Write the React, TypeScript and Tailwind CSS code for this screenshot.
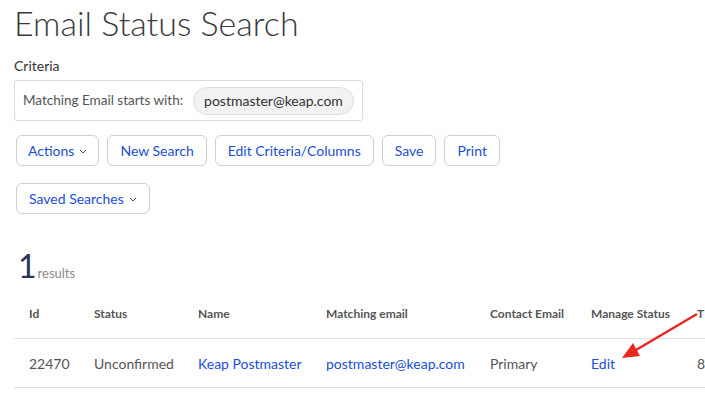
import React from 'react';

const buttons = ['New Search', 'Edit Criteria/Columns', 'Save', 'Print'];

const Chevron = () => (
  <svg width="8" height="5" viewBox="0 0 8 5" className="ml-[5px] mt-[1px]">
    <path d="M1 1l3 3 3-3" fill="none" stroke="#555" strokeWidth="1" />
  </svg>
);

const btn =
  'h-[31px] px-[12px] flex items-center border border-[#cfcfcf] rounded-[6px] bg-white text-[14px] text-[#1a4fd4]';

const cols = [
  { label: 'Id', w: 'w-[65px]' },
  { label: 'Status', w: 'w-[104px]' },
  { label: 'Name', w: 'w-[128px]' },
  { label: 'Matching email', w: 'w-[164px]' },
  { label: 'Contact Email', w: 'w-[101px]' },
  { label: 'Manage Status', w: 'w-[106px]' },
  { label: 'T', w: 'w-[60px]' },
];

const row: { text: string; link?: boolean }[] = [
  { text: '22470' },
  { text: 'Unconfirmed' },
  { text: 'Keap Postmaster', link: true },
  { text: 'postmaster@keap.com', link: true },
  { text: 'Primary' },
  { text: 'Edit', link: true },
  { text: '8' },
];

export default function App() {
  return (
    <div className="relative w-[705px] h-[396px] overflow-hidden bg-white font-['Lato',sans-serif] text-[#333]">
      <div className="pl-[14px] pt-[1px]">
        <h1 className="text-[34px] font-light leading-[44px] text-[#3a3a3a]">Email Status Search</h1>
        <div className="mt-[12px] text-[14px] leading-[18px] text-[#333]">Criteria</div>
        <div className="mt-[5px] w-[349px] h-[41px] border border-[#dcdcdc] rounded-[3px] flex items-center pl-[8px]">
          <span className="text-[13.5px] text-[#555]">Matching Email starts with:</span>
          <span className="ml-[10px] h-[28px] px-[10px] flex items-center rounded-full bg-[#f2f2f2] border border-[#dedede] text-[14px] text-[#333]">
            postmaster@keap.com
          </span>
        </div>
        <div className="mt-[14px] ml-[2px] flex gap-[8px]">
          <button className={`${btn} !px-[11px]`}>
            Actions
            <Chevron />
          </button>
          {buttons.map((b) => (
            <button key={b} className={btn}>
              {b}
            </button>
          ))}
        </div>
        <div className="mt-[17px] ml-[2px] flex">
          <button className={btn}>
            Saved Searches
            <Chevron />
          </button>
        </div>
        <div className="mt-[34px] ml-[4px] flex items-baseline">
          <span className="text-[32px] leading-[36px] text-[#2d3557]">1</span>
          <span className="ml-[1px] text-[13px] text-[#8a8a8a]">results</span>
        </div>
        <div className="mt-[5px] w-[800px]">
          <div className="flex h-[50px] items-center border-b border-[#e2e2e2]">
            {cols.map((c) => (
              <div key={c.label} className={`${c.w} shrink-0 pl-[15px] text-[12px] font-bold text-[#555] whitespace-nowrap`}>
                {c.label}
              </div>
            ))}
          </div>
          <div className="flex h-[49px] items-center border-b border-[#e2e2e2]">
            {row.map((c, i) => (
              <div
                key={i}
                className={`${cols[i].w} shrink-0 pl-[15px] text-[14px] whitespace-nowrap ${c.link ? 'text-[#1a4fd4]' : 'text-[#555]'}`}
              >
                {c.text}
              </div>
            ))}
          </div>
        </div>
      </div>
      <svg className="absolute left-0 top-0" width="705" height="396">
        <line x1="697" y1="314" x2="636" y2="350" stroke="#e8271f" strokeWidth="2.5" />
        <polygon points="622,358 633,343 640,356" fill="#e8271f" />
      </svg>
    </div>
  );
}
